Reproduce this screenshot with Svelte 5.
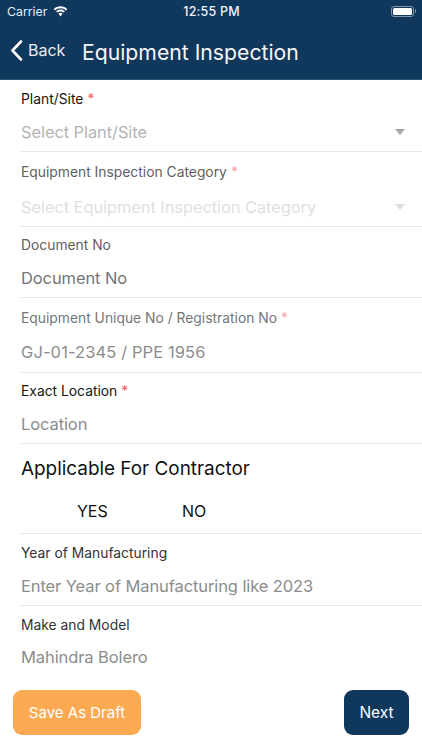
<script>
  const fields = [
    { label: 'Plant/Site', req: true, value: 'Select Plant/Site', tone: 'light', caret: true, cls: 'f1', labelTone: 'dark' },
    { label: 'Equipment Inspection Category', req: true, value: 'Select Equipment Inspection Category', tone: 'faint', caret: true, cls: 'f2', labelTone: 'grey' },
    { label: 'Document No', value: 'Document No', tone: 'strong', cls: 'f3', labelTone: 'grey' },
    { label: 'Equipment Unique No / Registration No', req: true, value: 'GJ-01-2345 / PPE 1956', tone: 'mid wide', cls: 'f4', labelTone: 'pale' },
    { label: 'Exact Location', req: true, value: 'Location', tone: 'mid', cls: 'f3', labelTone: 'dark' }
  ];
  const fields2 = [
    { label: 'Year of Manufacturing', value: 'Enter Year of Manufacturing like 2023', tone: 'mid', cls: 'f1', labelTone: 'soft' },
    { label: 'Make and Model', value: 'Mahindra Bolero', tone: 'mid', cls: 'f1 last', labelTone: 'soft' }
  ];
</script>

{#snippet field(f)}
  <div class="field {f.cls}">
    <div class="label {f.labelTone}">{f.label}{#if f.req}<span class="req">*</span>{/if}</div>
    <div class="value {f.tone}">
      <span>{f.value}</span>
      {#if f.caret}<i class="caret"></i>{/if}
    </div>
  </div>
{/snippet}

<div class="screen">
  <header>
    <div class="status">
      <div class="st-left">
        <span>Carrier</span>
        <svg width="15" height="11" viewBox="0 0 16 12" aria-hidden="true">
          <path d="M8 2.400c2.300 0 4.400.9 6 2.400l1.400-1.500C13.400 1.400 10.800.3 8 .3S2.600 1.400.6 3.300L2 4.800c1.600-1.500 3.700-2.400 6-2.400z" fill="#fff"/>
          <path d="M8 5.900c1.300 0 2.500.5 3.400 1.300l1.400-1.500C11.500 4.500 9.800 3.800 8 3.800s-3.500.7-4.800 1.900l1.400 1.500C5.500 6.400 6.700 5.900 8 5.900z" fill="#fff"/>
          <path d="M8 7.400c-.9 0-1.700.3-2.300.9L8 11.400l2.300-3.100c-.6-.6-1.400-.9-2.300-.9z" fill="#fff"/>
        </svg>
      </div>
      <span class="time">12:55 PM</span>
      <div class="battery"><i class="body"><b></b></i><i class="nub"></i></div>
    </div>
    <div class="nav">
      <div class="back">
        <svg width="13" height="21" viewBox="0 0 13 21" aria-hidden="true">
          <path d="M11 1.500L2.500 10.500 11 19.500" fill="none" stroke="#fff" stroke-width="2.600" stroke-linecap="round" stroke-linejoin="round"/>
        </svg>
        <span>Back</span>
      </div>
      <h1>Equipment Inspection</h1>
    </div>
  </header>

  <main>
    {#each fields as f}
      {@render field(f)}
    {/each}

    <section class="contractor">
      <h2>Applicable For Contractor</h2>
      <div class="options"><span>YES</span><span>NO</span></div>
    </section>

    {#each fields2 as f}
      {@render field(f)}
    {/each}
  </main>

  <footer>
    <button class="draft">Save As Draft</button>
    <button class="next">Next</button>
  </footer>
</div>

<style>
  :global(body) { margin: 0; background: #fff; }
  .screen {
    position: relative;
    width: 422px; height: 750px; overflow: hidden; display: flex; flex-direction: column;
    font-family: Inter, "Liberation Sans", sans-serif; background: #fff;
  }
  header { background: #10375c; height: 80px; color: #fff; box-sizing: border-box; border-bottom: 1px solid #2f5478; flex: none; }
  .status { height: 22px; display: grid; grid-template-columns: 1fr auto 1fr; align-items: center; font-size: 12px; padding: 0 6px 0 7px; }
  .st-left { display: flex; align-items: center; gap: 6px; font-size: 12.300px; color: #e8edf2; }
  .time { font-size: 12.500px; font-weight: 500; color: #eef2f5; letter-spacing: .2px; }
  .battery { justify-self: end; display: flex; align-items: center; gap: 1px; }
  .body { width: 23px; height: 11px; border: 1px solid #7f97ad; border-radius: 3px; box-sizing: border-box; padding: 1px; display: block; }
  .body b { display: block; width: 100%; height: 100%; background: #fff; border-radius: 1.500px; }
  .nub { width: 1.500px; height: 4px; background: #7f97ad; border-radius: 0 1px 1px 0; display: block; }
  .nav { display: flex; align-items: center; height: 57px; padding-left: 10px; }
  .back { display: flex; align-items: center; gap: 5px; font-size: 16px; color: #e9eef2; width: 72px; margin-top: -1px; }
  h1 { margin: 2px 0 0; font-size: 21.200px; font-weight: 400; color: #f4f6f8; }

  main { flex: 1; min-height: 0; }
  .field { margin-left: 20px; padding-left: 1px; border-bottom: 1px solid #e9e9e9; box-sizing: border-box; }
  .field.f1 { height: 72px; padding-top: 11px; }
  .field.f2 { height: 75px; padding-top: 11.500px; }
  .field.f3 { height: 71px; padding-top: 9.500px; }
  .field.f4 { height: 75px; padding-top: 11.500px; }
  .field.last { border-bottom: none; }
  .label { font-size: 13.850px; line-height: 17px; }
  .label.dark { color: #161616; }
  .label.soft { color: #333; }
  .label.grey { color: #5f5f5f; }
  .label.pale { color: #767676; }
  .req { margin-left: 4px; color: #ee5a60; }
  .grey .req, .pale .req { color: #f5a3a6; }
  .value { display: flex; justify-content: space-between; align-items: center; font-size: 16.500px; letter-spacing: -.1px; line-height: 22px; margin-top: 13px; padding-right: 17px; }
  .f2 .value { margin-top: 15.500px; }
  .f4 .value { margin-top: 14.500px; }
  .last .value { margin-top: 11.500px; }
  .value.light { color: #b4b4b4; }
  .value.faint { color: #e0e0e0; }
  .value.mid { color: #8c8c8c; }
  .value.strong { color: #757575; }
  .value.wide { letter-spacing: .1px; }
  .caret { width: 0; height: 0; border-left: 5.500px solid transparent; border-right: 5.500px solid transparent; border-top: 6px solid #a8a8a8; display: block; }
  .f2 .caret { border-top-color: #dedede; }

  .contractor { margin-left: 20px; padding: 12px 0 0 1px; height: 90px; box-sizing: border-box; border-bottom: 1px solid #e9e9e9; }
  h2 { margin: 0; font-size: 18.900px; line-height: 26px; font-weight: 400; color: #111; }
  .options { display: flex; margin-top: 19px; padding-left: 56px; font-size: 16px; line-height: 20px; color: #111; }
  .options span:first-child { width: 105px; }

  footer { position: absolute; left: 0; top: 690px; width: 422px; height: 45px; box-sizing: border-box; padding: 0 13px; display: flex; justify-content: space-between; }
  button { border: none; color: #fff; font-family: inherit; font-size: 15px; border-radius: 9px; height: 45px; padding: 0; }
  .draft { width: 128px; background: #fbaa51; }
  .next { width: 65px; background: #10375c; font-size: 15.500px; }
</style>
